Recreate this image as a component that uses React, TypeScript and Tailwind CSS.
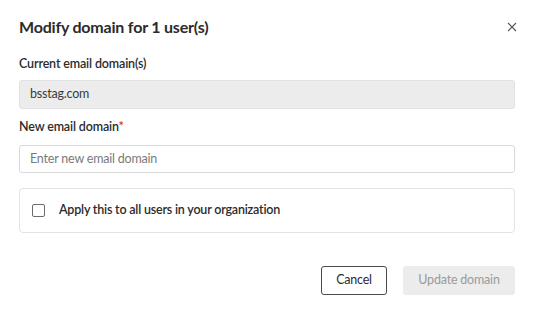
import React from "react";

export default function App() {
  return (
    <div className="w-[537px] h-[310px] bg-white relative" style={{ fontFamily: "Lato, 'Noto Sans', sans-serif" }}>
      <div className="pl-[19px] pr-[22px] pt-[16px] flex flex-col">
        <div className="flex items-center justify-between h-[22px]">
          <h2 className="text-[16px] font-bold text-[#2b2b2b] tracking-[-0.2px]">Modify domain for 1 user(s)</h2>
          <button className="w-[12px] h-[12px] flex items-center justify-center mr-[-3px] text-[#555]">
            <svg width="10" height="10" viewBox="0 0 10 10" fill="none" stroke="currentColor" strokeWidth="1.1">
              <path d="M1 1L9 9M9 1L1 9" />
            </svg>
          </button>
        </div>
        <label className="mt-[18px] text-[12.5px] font-semibold text-[#2b2b2b] leading-[16px] tracking-[-0.15px]">Current email domain(s)</label>
        <div className="mt-[8px] h-[29px] rounded-[3px] bg-[#ececec] border border-[#e2e2e2] flex items-center px-[10px] text-[12.5px] text-[#3a3a3a] tracking-[-0.2px]">
          bsstag.com
        </div>
        <label className="mt-[10px] text-[12.5px] font-semibold text-[#2b2b2b] leading-[16px] tracking-[-0.15px]">
          New email domain<span className="text-[#d0342c]">*</span>
        </label>
        <div className="mt-[10px] h-[28px] rounded-[3px] bg-white border border-[#d9d9d9] flex items-center px-[10px] text-[12.5px] text-[#7a7a7a] tracking-[-0.2px]">
          Enter new email domain
        </div>
        <div className="mt-[15px] h-[45px] rounded-[4px] border border-[#e3e3e3] flex items-center px-[12px]">
          <div className="w-[13px] h-[13px] border-[1.5px] border-[#6b6b6b] rounded-[2px]" />
          <span className="ml-[14px] text-[12.5px] font-semibold text-[#2b2b2b] tracking-[-0.2px]">Apply this to all users in your organization</span>
        </div>
        <div className="mt-[33px] flex justify-end gap-[16px]">
          <button className="h-[29px] w-[66px] rounded-[3px] border border-[#4a4a4a] text-[12.5px] text-[#2b2b2b] tracking-[-0.2px]">Cancel</button>
          <button className="h-[29px] w-[112px] rounded-[3px] bg-[#ececec] text-[12.5px] text-[#9a9a9a] tracking-[-0.2px]">Update domain</button>
        </div>
      </div>
    </div>
  );
}
